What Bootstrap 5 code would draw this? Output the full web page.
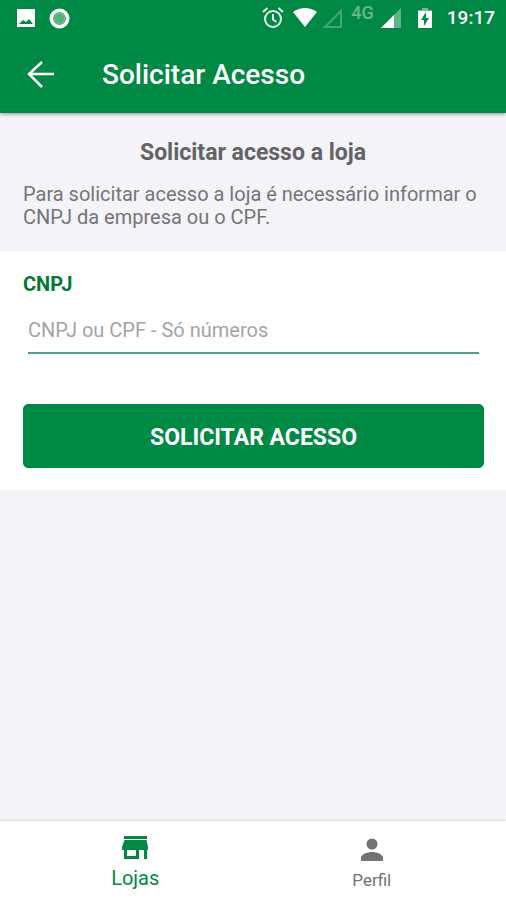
<!DOCTYPE html>
<html lang="pt-BR">
<head>
<meta charset="utf-8">
<meta name="viewport" content="width=device-width, initial-scale=1">
<title>Solicitar Acesso</title>
<link href="https://cdn.jsdelivr.net/npm/bootstrap@5.3.0/dist/css/bootstrap.min.css" rel="stylesheet">
<style>
  :root { --brand: #008945; --brand-dark: #007a33; --ink: #636367; --ink-soft: #757579; --page: #f3f3f8; }
  body { font-family: Roboto, "Liberation Sans", sans-serif; background: var(--page); color: var(--ink); }
  svg { display: block; flex: none; }
  .app-top { background: var(--brand); box-shadow: 0 1px 4px rgba(0, 0, 0, .4); }
  .status-bar { height: 36px; padding: 0 11px 0 16px; }
  .status-left { gap: 13px; }
  .net-label { font-size: 18px; line-height: 20px; opacity: .4; margin: 0 7px 10px; }
  .clock { font-size: 19px; line-height: 24px; margin-left: 15px; }
  .semi { font-weight: 500; }
  .title-bar { height: 77px; padding: 0 24px; gap: 44px; }
  .title-bar h1 { font-size: 28px; line-height: 32px; }
  .intro { padding: 26px 23px 23px; }
  .intro h2 { font-size: 23px; line-height: 28px; margin-bottom: 16px; }
  .intro p { font-size: 20px; line-height: 23px; color: var(--ink-soft); }
  .request-form { padding: 20px 22px 22px 23px; }
  .field-label { font-size: 20px; line-height: 24px; color: var(--brand-dark); }
  .line-input { font-size: 20px; line-height: 24px; padding: 11px 0 10px; border-color: #579c83; border-width: 0 0 2px; background: transparent; color: var(--ink); }
  .line-input::placeholder { color: #a4a4a4; }
  .line-input:focus { background: transparent; box-shadow: none; border-color: var(--brand); }
  .field-box { padding: 11px 5px 0; margin-bottom: 50px; }
  .btn-brand { --bs-btn-bg: var(--brand); --bs-btn-color: #fff; --bs-btn-border-color: var(--brand); --bs-btn-hover-bg: var(--brand-dark); --bs-btn-hover-color: #fff; --bs-btn-active-bg: var(--brand-dark); --bs-btn-active-color: #fff; font-size: 23px; line-height: 28px; padding: 19px 12px 15px; border-radius: 5px; }
  .tab-bar { height: 79px; padding: 0 16px 0 17px; box-shadow: 0 -1px 2px rgba(0, 0, 0, .12); }
  .tab-bar a { color: #727272; font-size: 17px; line-height: 22px; padding-top: 11px; gap: 7px; }
  .tab-bar a.active { color: var(--brand); font-size: 20px; }
</style>
</head>
<body>
<div class="d-flex flex-column min-vh-100">
  <header class="app-top text-white position-relative">
    <div class="status-bar d-flex align-items-center justify-content-between">
      <div class="status-left d-flex align-items-center">
        <svg width="20" height="20" viewBox="0 0 20 20" aria-hidden="true"><path fill="#fff" fill-rule="evenodd" d="M2 1h16q1 0 1 1v16q0 1-1 1H2q-1 0-1-1V2q0-1 1-1zM3 16h14l-4-5-3 3-3-2z"/></svg>
        <svg width="21" height="21" viewBox="0 0 21 21" aria-hidden="true"><circle cx="10.500" cy="10.500" r="10" fill="#fff"/><circle cx="10.500" cy="10.500" r="6.500" fill="#55b07f"/><circle cx="10.500" cy="10.500" r="5" fill="none" stroke="#78bf98"/></svg>
      </div>
      <div class="d-flex align-items-center">
        <svg width="22" height="22" viewBox="0 0 22 22" fill="none" stroke="#e9f8ef" stroke-width="2" aria-hidden="true"><circle cx="11" cy="12" r="8"/><path d="M11 7v5.500l3.500 2.500M1 5l4.500-4M21 5l-4.500-4"/></svg>
        <svg class="ms-2" width="26" height="22" viewBox="0 0 26 22" aria-hidden="true"><path fill="#fff" d="M1 5Q13-3 25 5L13 20z"/></svg>
        <svg class="ms-1" width="22" height="22" viewBox="0 0 22 22" fill="none" stroke="#45a673" stroke-width="2" aria-hidden="true"><path d="M3 20 19 4v16z"/></svg>
        <span class="net-label semi">4G</span>
        <svg width="21" height="22" viewBox="0 0 21 22" aria-hidden="true"><path fill="#5fb386" d="M0 21 20 1v20z"/><path fill="#fff" d="M0 21 13 8v13z"/></svg>
        <svg class="ms-3" width="14" height="22" viewBox="0 0 14 22" aria-hidden="true"><path fill="#74bd94" d="M4 1h6v2h4v4H0V3h4z"/><path fill="#fff" d="M0 4h14v16q0 1-1 1H1q-1 0-1-1z"/><path fill="#008945" d="M8 5 3 13h3v6l5-8H8z"/></svg>
        <span class="clock semi">19:17</span>
      </div>
    </div>
    <div class="title-bar d-flex align-items-center">
      <button type="button" class="btn p-0 border-0 text-white" aria-label="Voltar">
        <svg width="34" height="34" viewBox="0 0 34 34" fill="none" stroke="currentColor" stroke-width="2.500" aria-hidden="true"><path d="M30 16H5M18 4 5 16l13 13"/></svg>
      </button>
      <h1 class="semi m-0">Solicitar Acesso</h1>
    </div>
  </header>

  <main class="flex-grow-1">
    <section class="intro">
      <h2 class="fw-bold text-center">Solicitar acesso a loja</h2>
      <p class="m-0">Para solicitar acesso a loja é necessário informar o CNPJ da empresa ou o CPF.</p>
    </section>
    <form class="request-form bg-white">
      <label class="field-label fw-bold d-block" for="cnpj">CNPJ</label>
      <div class="field-box">
        <input class="form-control line-input rounded-0" id="cnpj" type="text" inputmode="numeric" placeholder="CNPJ ou CPF - Só números">
      </div>
      <button type="button" class="btn btn-brand fw-bold w-100">SOLICITAR ACESSO</button>
    </form>
  </main>

  <nav class="tab-bar bg-white d-flex sticky-bottom" aria-label="Principal">
    <a class="active flex-fill w-50 d-flex flex-column align-items-center text-decoration-none" href="#lojas" aria-current="page">
      <svg width="26" height="28" viewBox="0 0 26 28" fill="currentColor" aria-hidden="true"><path d="M2 4h23v3H2z"/><path fill-rule="evenodd" d="M2.500 8h22L26 15v3h-1v9h-3v-9h-5v9H2v-9H0v-3zM5 18v6h9v-6z"/></svg>
      <span>Lojas</span>
    </a>
    <a class="flex-fill w-50 d-flex flex-column align-items-center text-decoration-none" href="#perfil">
      <svg width="24" height="30" viewBox="0 0 24 30" fill="currentColor" aria-hidden="true"><circle cx="12" cy="12" r="5.500"/><path d="M1 29v-3c0-4 7-6 11-6s11 2 11 6v3z"/></svg>
      <span>Perfil</span>
    </a>
  </nav>
</div>
<script src="https://cdn.jsdelivr.net/npm/bootstrap@5.3.0/dist/js/bootstrap.bundle.min.js"></script>
</body>
</html>
